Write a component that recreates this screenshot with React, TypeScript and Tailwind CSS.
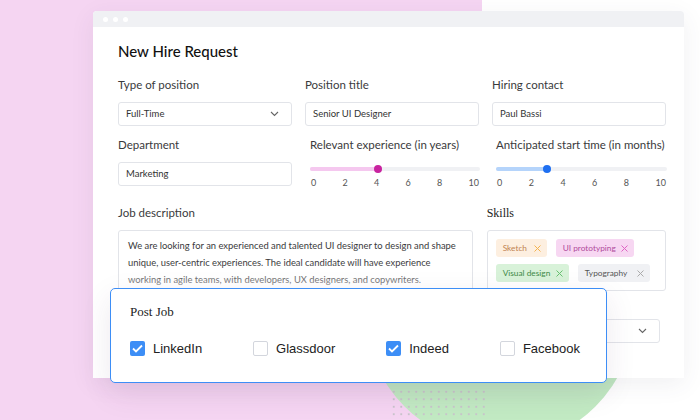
import React from "react";

const sans = "font-['Lato','Liberation_Sans',sans-serif]";

function Label({ children }: { children: React.ReactNode }) {
  return <p className="text-[11.5px] leading-[16px] text-[#3a3a3c]">{children}</p>;
}

function Field({ value, select }: { value: string; select?: boolean }) {
  return (
    <div className="mt-[9px] flex h-[24px] items-center justify-between rounded-[3px] border border-[#e2e4e9] bg-white pl-[7px] pr-[12px] text-[9.5px] text-[#333]">
      <span>{value}</span>
      {select && (
        <svg width="9" height="6" viewBox="0 0 9 6" fill="none">
          <path d="M1 1l3.5 3.5L8 1" stroke="#666" strokeWidth="1.1" />
        </svg>
      )}
    </div>
  );
}

function Slider({ pct, fill, thumb }: { pct: number; fill: string; thumb: string }) {
  return (
    <div className="mt-[14px]">
      <div className="relative h-[4px] rounded-full bg-[#f0f1f4]">
        <div className={`h-full rounded-full ${fill}`} style={{ width: `${pct}%` }} />
        <div
          className={`absolute top-1/2 h-[8px] w-[8px] -translate-x-1/2 -translate-y-1/2 rounded-full ${thumb}`}
          style={{ left: `${pct}%` }}
        />
      </div>
      <div className="mt-[6px] flex justify-between px-[1px] text-[9px] leading-[12px] text-[#555]">
        {["0", "2", "4", "6", "8", "10"].map((n) => (
          <span key={n}>{n}</span>
        ))}
      </div>
    </div>
  );
}

function Chip({ text, w, bg, fg, x }: { text: string; w: string; bg: string; fg: string; x: string }) {
  return (
    <div className={`flex h-[18px] shrink-0 items-center justify-between rounded-[3px] pl-[7px] pr-[6px] text-[8.3px] ${w} ${bg} ${fg}`}>
      <span className="whitespace-nowrap">{text}</span>
      <svg className="shrink-0" width="7" height="7" viewBox="0 0 7 7">
        <path d="M0.5 0.5l6 6M6.5 0.5l-6 6" stroke={x} strokeWidth="1" />
      </svg>
    </div>
  );
}

function Check({ on, label }: { on?: boolean; label: string }) {
  return (
    <div className="flex items-center gap-[8px]">
      {on ? (
        <div className="flex h-[15px] w-[15px] items-center justify-center rounded-[2px] bg-[#3d8ef6]">
          <svg width="11" height="9" viewBox="0 0 11 9" fill="none">
            <path d="M1 4.5l3 3L10 1.5" stroke="white" strokeWidth="1.8" />
          </svg>
        </div>
      ) : (
        <div className="h-[15px] w-[15px] rounded-[2px] border border-[#d3d6dd] bg-white" />
      )}
      <span className="font-['Liberation_Sans',sans-serif] text-[13px] text-[#222]">{label}</span>
    </div>
  );
}

export default function App() {
  return (
    <div className={`relative h-[420px] w-[700px] overflow-hidden bg-white ${sans}`}>
      {/* backdrop */}
      <div className="absolute left-0 top-0 h-full w-[482px] bg-[#f5d5f2]" />
      <div className="absolute left-[365px] top-[176px] h-[270px] w-[270px] rounded-full bg-[#c2eac3]" />
      <div className="absolute left-[390px] top-[388px] h-[32px] w-[96px] bg-[radial-gradient(circle,#c9c4cc_0.8px,transparent_1.2px)] bg-[size:7.5px_7.5px]" />

      {/* window */}
      <div className="relative ml-[93px] mt-[11px] h-[367px] w-[591px] overflow-hidden rounded-t-[4px] bg-white shadow-[0_6px_24px_rgba(60,60,90,0.08)]">
        <div className="flex h-[16px] items-center gap-[5px] bg-[#f0f1f4] pl-[10px]">
          <span className="h-[5px] w-[5px] rounded-full bg-white" />
          <span className="h-[5px] w-[5px] rounded-full bg-white" />
          <span className="h-[5px] w-[5px] rounded-full bg-white" />
        </div>

        <div className="pl-[25px] pr-[18px] pt-[14px]">
          <h1 className="text-[15px] font-medium leading-[20px] text-[#111]">New Hire Request</h1>

          <div className="mt-[16px] grid grid-cols-3 gap-x-[13px]">
            <div>
              <Label>Type of position</Label>
              <Field value="Full-Time" select />
            </div>
            <div>
              <Label>Position title</Label>
              <Field value="Senior UI Designer" />
            </div>
            <div>
              <Label>Hiring contact</Label>
              <Field value="Paul Bassi" />
            </div>
          </div>

          <div className="mt-[11px] grid grid-cols-3 gap-x-[13px]">
            <div>
              <Label>Department</Label>
              <Field value="Marketing" />
            </div>
            <div className="-mr-[1px] pl-[5px]">
              <Label>Relevant experience (in years)</Label>
              <Slider pct={40} fill="bg-[#f5c8ef]" thumb="bg-[#c8239f]" />
            </div>
            <div className="-mr-[1px] pl-[4px]">
              <Label>Anticipated start time (in months)</Label>
              <Slider pct={30} fill="bg-[#b5d4fb]" thumb="bg-[#1e6ff1]" />
            </div>
          </div>

          <div className="mt-[16px] flex gap-[14px]">
            <div className="w-[356px]">
              <Label>Job description</Label>
              <div className="relative mt-[9px] h-[90px] rounded-[3px] border border-[#e2e4e9] px-[9px] pt-[6px] text-[9.4px] leading-[17px] text-[#3a3a3c]">
                <p className="whitespace-nowrap">We are looking for an experienced and talented UI designer to design and shape</p>
                <p className="whitespace-nowrap">unique, user-centric experiences. The ideal candidate will have experience</p>
                <p className="whitespace-nowrap">working in agile teams, with developers, UX designers, and copywriters.</p>
                <div className="absolute inset-x-0 bottom-0 h-[56px] bg-gradient-to-b from-white/0 to-white" />
              </div>
            </div>
            <div className="w-[180px]">
              <p className="font-['Liberation_Serif',serif] text-[12px] leading-[16px] text-[#222]">Skills</p>
              <div className="mt-[9px] flex flex-wrap gap-x-[9px] gap-y-[7px] rounded-[3px] border border-[#e2e4e9] p-[8px]">
                <Chip text="Sketch" w="w-[51px]" bg="bg-[#fdefe0]" fg="text-[#c08250]" x="#f4b34e" />
                <Chip text="UI prototyping" w="w-[78px]" bg="bg-[#f7d7f2]" fg="text-[#b04b9c]" x="#df63c4" />
                <Chip text="Visual design" w="w-[73px]" bg="bg-[#d8f2d9]" fg="text-[#3f8a48]" x="#67c070" />
                <Chip text="Typography" w="w-[72px]" bg="bg-[#f0f1f4]" fg="text-[#555]" x="#aaa" />
              </div>
              <div className="mr-[6px] mt-[28px] flex h-[24px] items-center justify-end rounded-[3px] border border-[#e2e4e9] pr-[12px]">
                <svg width="9" height="6" viewBox="0 0 9 6" fill="none">
                  <path d="M1 1l3.5 3.5L8 1" stroke="#666" strokeWidth="1.1" />
                </svg>
              </div>
            </div>
          </div>
        </div>
      </div>

      {/* post job overlay */}
      <div className="absolute left-[110px] top-[288px] h-[95px] w-[497px] rounded-[5px] border-[1.5px] border-[#3d8ef6] bg-white pl-[19px] pr-[26px] pt-[14px] shadow-[0_10px_30px_rgba(80,40,90,0.10)]">
        <p className="font-['Liberation_Serif',serif] text-[13px] leading-[18px] text-[#222]">Post Job</p>
        <div className="mt-[18px] flex items-center justify-between">
          <Check on label="LinkedIn" />
          <Check label="Glassdoor" />
          <Check on label="Indeed" />
          <Check label="Facebook" />
        </div>
      </div>
    </div>
  );
}
